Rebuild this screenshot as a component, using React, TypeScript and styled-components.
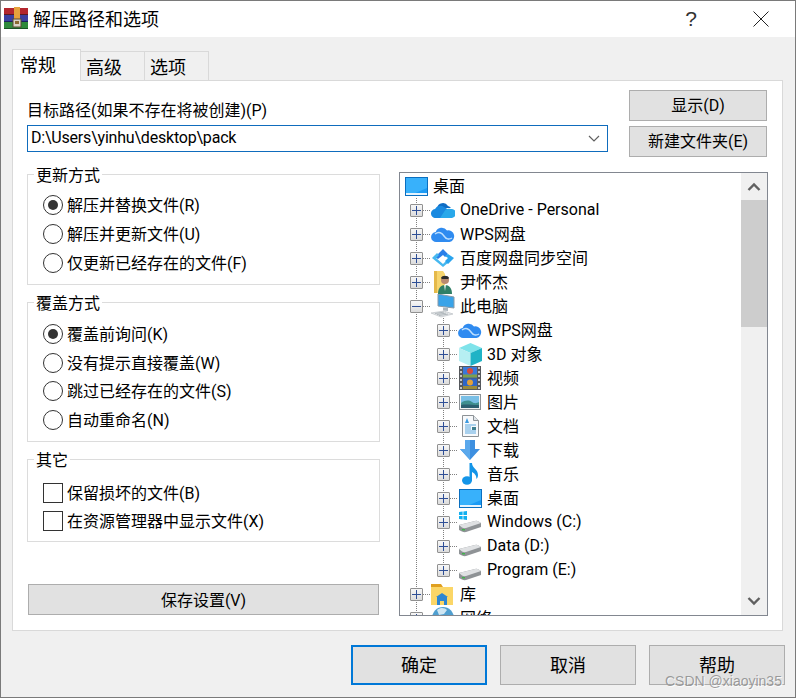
import { ReactNode } from "react";
import styled, { createGlobalStyle } from "styled-components";

const FONT = `Roboto, "Noto Sans CJK SC", sans-serif`;

const GlobalStyle = createGlobalStyle`
  html, body {
    margin: 0;
    padding: 0;
    background: #ffffff;
    overflow: hidden;
  }
  * {
    box-sizing: border-box;
  }
`;

const WinRarIcon = () => (
  <svg width="24" height="24" viewBox="0 0 24 24">
    <rect x="0" y="1" width="24" height="7" fill="#b3262e" />
    <rect x="0" y="8" width="24" height="7" fill="#3b3fa0" />
    <rect x="0" y="15" width="24" height="7" fill="#2f8a3c" />
    <rect x="0" y="7" width="24" height="1" fill="#5c1820" />
    <rect x="0" y="14" width="24" height="1" fill="#1c1f5e" />
    <rect x="0" y="21" width="24" height="1" fill="#1a5223" />
    <rect x="10" y="0" width="6" height="12" fill="#e6a23c" />
    <rect x="9" y="12" width="8" height="8" fill="#d9d4c7" stroke="#5a4a30" />
    <rect x="11" y="14" width="4" height="3" fill="#8a6a30" />
  </svg>
);

const DesktopIcon = () => (
  <svg width="23" height="19" viewBox="0 0 23 19">
    <rect x="0.5" y="0.5" width="22" height="18" fill="#1b9bf5" stroke="#0a6fc0" />
    <path d="M1 1h21v10L8 17H1z" fill="#38b1fb" />
    <rect x="1" y="16" width="21" height="2" fill="#e6f4fe" />
  </svg>
);

const OneDriveIcon = () => (
  <svg width="24" height="16" viewBox="0 0 24 16">
    <path d="M6 6a6 6 0 0 1 11-2 5 5 0 0 1 3 2z" fill="#0f6cc4" />
    <path d="M5 16a4.5 4.5 0 0 1-1-9 6 6 0 0 1 9-2l5 3-7 8z" fill="#1a8ae0" />
    <path d="M9 16l4-6a6 6 0 0 1 7-3 4.5 4.5 0 0 1 1 9z" fill="#29a8ea" />
  </svg>
);

const WpsCloudIcon = () => (
  <svg width="24" height="17" viewBox="0 0 24 17">
    <path
      d="M5.5 16a5 5 0 0 1-.8-10A6.5 6.5 0 0 1 16 4.4 5.8 5.8 0 0 1 18.5 16z"
      fill="#2f8bf0"
    />
    <path d="M4 8c4-3 7-1 9 2s5 4 8 2" fill="none" stroke="#bfe0ff" strokeWidth="1.4" />
  </svg>
);

const BaiduIcon = () => (
  <svg width="24" height="20" viewBox="0 0 24 20">
    <path d="M12 1l5 5-3 3-2-2-5 4-3-2z" fill="#2a7fe8" />
    <path d="M1 10l5-5 2 2-3 3 7 6 4-4 2 2-6 5z" fill="#46b8f0" />
    <path d="M17 6l6 4-6 6-3-3 3-3-3-2z" fill="#2aa4ee" />
  </svg>
);

const UserFolderIcon = () => (
  <svg width="22" height="23" viewBox="0 0 22 23">
    <path d="M2 0h9l2 3v19H2z" fill="#f6d56f" />
    <path d="M2 0h3v22H2z" fill="#e5b94a" />
    <circle cx="13" cy="9" r="4" fill="#b98a70" />
    <path d="M9 7c1-3 7-3 8 0l-1 1H10z" fill="#2b2b2b" />
    <path d="M6 23c0-6 3-9 7-9s7 3 7 9z" fill="#2f7f66" />
    <path d="M12 14h2l-1 6z" fill="#e8f0ec" />
  </svg>
);

const ComputerIcon = () => (
  <svg width="24" height="24" viewBox="0 0 24 24">
    <path d="M7 0l16 3v11L7 12z" fill="#3aa3e8" stroke="#8a9aa8" />
    <path d="M12 13.5l5 .6v3l-5-.6z" fill="#aab4bc" />
    <path d="M0 19l13-2 9 3-12 3z" fill="#e4e7e9" stroke="#b3b9be" strokeWidth="0.6" />
    <path d="M4 19.5l9-1.4M6 20.5l9-1.4M8 21.5l9-1.4" stroke="#9aa2a8" strokeWidth="0.7" />
  </svg>
);

const CubeIcon = () => (
  <svg width="23" height="23" viewBox="0 0 23 23">
    <path d="M11.5 0L23 5 11.5 10 0 5z" fill="#7fe3ea" />
    <path d="M0 5l11.5 5v13L0 18z" fill="#b6eff2" />
    <path d="M23 5L11.5 10v13L23 18z" fill="#1fb3c6" />
  </svg>
);

const FilmIcon = () => (
  <svg width="22" height="24" viewBox="0 0 22 24">
    <rect width="22" height="24" fill="#55585c" />
    <rect x="4" y="1" width="14" height="10.5" fill="#3a78d8" />
    <rect x="4" y="12.5" width="14" height="10.5" fill="#2e66c8" />
    <circle cx="11" cy="5" r="3" fill="#d84a3a" />
    <circle cx="11" cy="16.5" r="3" fill="#e2a13a" />
    <rect x="4" y="8.5" width="14" height="3" fill="#7fa04a" />
    <rect x="4" y="20" width="14" height="3" fill="#9a8a3a" />
    <path d="M1 2h2M1 6h2M1 10h2M1 14h2M1 18h2M1 22h2M19 2h2M19 6h2M19 10h2M19 14h2M19 18h2M19 22h2" stroke="#e8e8e8" strokeWidth="1.6" />
  </svg>
);

const PictureIcon = () => (
  <svg width="22" height="16" viewBox="0 0 22 16">
    <rect x="0.5" y="0.5" width="21" height="15" fill="#f2f2f2" stroke="#8d9296" />
    <rect x="2" y="2" width="18" height="12" fill="#79bfe6" />
    <path d="M2 9c4-3 8-3 11-1s5 1 7 0v6H2z" fill="#3f8f8f" />
    <path d="M2 11c5-1 10 0 18 0v3H2z" fill="#2c5f70" />
  </svg>
);

const DocumentIcon = () => (
  <svg width="17" height="22" viewBox="0 0 17 22">
    <path d="M.5.5h11l5 5v16H.5z" fill="#f7f9fb" stroke="#8d9296" />
    <path d="M11.5.5v5h5" fill="#dfe5ea" stroke="#8d9296" />
    <path d="M5 3L3 8h4z" fill="#3d9ae0" />
    <path d="M3 10h11M3 12h6M3 14h6M3 16h11M3 18h11" stroke="#5aa8e0" />
    <rect x="10" y="12" width="4" height="3" fill="#3f7f8f" />
  </svg>
);

const DownArrowIcon = () => (
  <svg width="20" height="20" viewBox="0 0 20 20">
    <path d="M5 0h10v9h5L10 20 0 9h5z" fill="#3d8fe0" />
    <path d="M5 0h5v20L0 9h5z" fill="#5aa8ec" />
  </svg>
);

const MusicIcon = () => (
  <svg width="17" height="22" viewBox="0 0 17 22">
    <ellipse cx="5" cy="17.5" rx="5" ry="4.2" fill="#1495e8" />
    <path d="M7.5 0H10c0 5 6 6 6 12 0 2-.6 3-1.6 4 .2-4-2.4-6-4.4-7v9H7.5z" fill="#1495e8" />
  </svg>
);

const DriveIcon = ({ windows }: { windows?: boolean }) => (
  <svg width="24" height="22" viewBox="0 0 24 22">
    {windows && <path d="M1 1l3.6-.5V4H1zM5.4.4L9 0v4H5.4zM1 5h3.6v3.5L1 8zM5.4 5H9v4l-3.6-.5z" fill="#12b0f0" />}
    <path d="M1 14l16-4q2-.5 3.5.5L23 12v4L8 21q-2 .5-4-.5L1 19z" fill="#8f9396" />
    <path d="M1 14l16-4q2-.5 3.5.5L23 12 8 17q-2 .5-4-.5z" fill="#dfe1e3" />
    <rect x="4" y="18" width="3" height="1.4" fill="#3fb54a" />
  </svg>
);

const LibraryIcon = () => (
  <svg width="24" height="21" viewBox="0 0 24 21">
    <path d="M0 0h10l2 3H0z" fill="#e0a020" />
    <rect y="3" width="22" height="18" fill="#fbd667" />
    <path d="M6 21v-8H5l6-4 6 4h-1v8h-3v-4H9v4z" fill="#2d86d2" />
  </svg>
);

const GlobeIcon = () => (
  <svg width="24" height="24" viewBox="0 0 24 24">
    <circle cx="12" cy="12" r="11" fill="#4f9fd0" />
    <path d="M6 4c4-3 8-2 10 0l-3 4-5 1z" fill="#cfe6f3" />
  </svg>
);

const Window = styled.div`
  position: relative;
  width: 796px;
  height: 698px;
  display: flex;
  flex-direction: column;
  background: #f0f0f0;
  border: 1px solid #7a7a7a;
  color: #000000;
  font-family: ${FONT};
  font-size: 16px;
`;

const TitleBar = styled.div`
  height: 36px;
  flex: none;
  display: flex;
  align-items: center;
  background: #ffffff;
  padding: 0 26px 0 3px;
`;

const TitleText = styled.span`
  margin-left: 5px;
  padding-bottom: 2px;
  font-size: 18px;
  flex: 1;
`;

const HelpMark = styled.span`
  font-family: "Liberation Sans", sans-serif;
  font-size: 21px;
  color: #333333;
  margin-right: 56px;
`;

const Content = styled.div`
  flex: 1;
  display: flex;
  flex-direction: column;
  padding: 12px 12px 0 11px;
`;

const TabRow = styled.div`
  display: flex;
  align-items: flex-end;
  height: 32px;
  margin-bottom: -1px;
  position: relative;
  z-index: 1;
`;

const Tab = styled.div<{ $active?: boolean }>`
  height: ${({ $active }) => ($active ? 32 : 30)}px;
  width: ${({ $active }) => ($active ? 69 : 64)}px;
  display: flex;
  align-items: center;
  padding-left: ${({ $active }) => ($active ? 7 : 5)}px;
  padding-bottom: ${({ $active }) => ($active ? 3 : 1)}px;
  font-size: 18px;
  background: ${({ $active }) => ($active ? "#ffffff" : "#f0f0f0")};
  border: 1px solid #d9d9d9;
  border-left-width: ${({ $active }) => ($active ? 1 : 0)}px;
  border-bottom: ${({ $active }) => ($active ? "none" : "1px solid #d9d9d9")};
`;

const Panel = styled.div`
  height: 551px;
  background: #ffffff;
  border: 1px solid #d9d9d9;
  padding: 9px 14px 0 14px;
`;

const TopRow = styled.div`
  display: flex;
  justify-content: space-between;
  height: 67px;
  margin-bottom: 15px;
`;

const PathBlock = styled.div`
  width: 581px;
  display: flex;
  flex-direction: column;
  justify-content: flex-end;
  padding-bottom: 5px;
`;

const PathLabel = styled.label`
  line-height: 22px;
  margin-bottom: 3px;
`;

const Combo = styled.div`
  height: 27px;
  display: flex;
  align-items: center;
  justify-content: space-between;
  border: 1px solid #0f6cbd;
  padding: 0 7px 0 3px;
`;

const ComboValue = styled.span`
  padding-bottom: 2px;
  letter-spacing: -0.2px;
`;

const TopButtons = styled.div`
  width: 138px;
  margin-right: 1px;
  display: flex;
  flex-direction: column;
  gap: 5px;
`;

const Button = styled.button`
  height: 31px;
  width: 100%;
  background: #e1e1e1;
  border: 1px solid #adadad;
  border-radius: 0;
  padding: 0 0 3px;
  font-family: inherit;
  font-size: 16px;
  color: #000000;
`;

const Columns = styled.div`
  display: flex;
  justify-content: space-between;
`;

const LeftColumn = styled.div`
  width: 353px;
  padding-top: 2px;
  display: flex;
  flex-direction: column;
  gap: 17px;
`;

const Group = styled.div<{ $height: number; $top: number }>`
  position: relative;
  height: ${({ $height }) => $height}px;
  padding: ${({ $top }) => $top}px 0 0 15px;
  border: 1px solid #dcdcdc;
`;

const GroupTitle = styled.span`
  position: absolute;
  top: -10px;
  left: 6px;
  padding: 0 2px;
  background: #ffffff;
  line-height: 22px;
`;

const OptionRow = styled.div<{ $height: number }>`
  height: ${({ $height }) => $height}px;
  display: flex;
  align-items: center;
  gap: 4px;
`;

const OptionText = styled.span`
  padding-bottom: 2px;
`;

const Radio = styled.span<{ $checked?: boolean }>`
  width: 20px;
  height: 20px;
  flex: none;
  display: flex;
  align-items: center;
  justify-content: center;
  border-radius: 50%;
  border: 1.5px solid #333333;
  &::after {
    content: "";
    width: 10px;
    height: 10px;
    border-radius: 50%;
    background: ${({ $checked }) => ($checked ? "#333333" : "transparent")};
  }
`;

const Checkbox = styled.span`
  width: 20px;
  height: 20px;
  flex: none;
  border: 1.5px solid #333333;
`;

const SaveButton = styled(Button)`
  width: 351px;
  margin: 25px 0 0 1px;
  padding-bottom: 2px;
`;

const Tree = styled.div`
  width: 369px;
  height: 444px;
  display: flex;
  border: 1px solid #828790;
`;

const TreeList = styled.div`
  flex: 1;
  min-width: 0;
  overflow: hidden;
  padding: 1px 0 0 4px;
`;

const TreeRow = styled.div`
  height: 24px;
  display: flex;
  align-items: center;
  white-space: nowrap;
`;

const TreeLabel = styled.span`
  padding-bottom: 2px;
`;

const GUIDE = "repeating-linear-gradient(to bottom, #808080 0 1px, transparent 1px 2px)";
const BRANCH = "repeating-linear-gradient(to right, #808080 0 1px, transparent 1px 2px)";

const Guide = styled.span`
  width: 27px;
  height: 24px;
  flex: none;
  background: ${GUIDE} 12px 0 / 1px 100% no-repeat;
`;

const ExpanderCell = styled.span<{ $last?: boolean }>`
  width: 27px;
  height: 24px;
  flex: none;
  display: flex;
  align-items: center;
  padding: 1px 0 0 6px;
  background:
    ${GUIDE} 12px 0 / 1px ${({ $last }) => ($last ? "50%" : "100%")} no-repeat,
    ${BRANCH} 13px 50% / 14px 1px no-repeat;
`;

const ExpanderBox = styled.span`
  width: 13px;
  height: 13px;
  display: flex;
  background: linear-gradient(#f7f7f7, #dcdcdc);
  border: 1px solid #919191;
  border-radius: 1px;
`;

const IconSlot = styled.span`
  width: 24px;
  height: 24px;
  flex: none;
  margin-right: 5px;
  display: flex;
  align-items: center;
  justify-content: center;
`;

const ScrollTrack = styled.div`
  width: 26px;
  flex: none;
  display: flex;
  flex-direction: column;
  background: #f0f0f0;
`;

const ScrollArrow = styled.div`
  height: 27px;
  flex: none;
  display: flex;
  align-items: center;
  justify-content: center;
`;

const ScrollThumb = styled.div`
  height: 127px;
  flex: none;
  background: #cdcdcd;
`;

const ScrollGap = styled.div`
  flex: 1;
`;

const Footer = styled.div`
  display: flex;
  justify-content: flex-end;
  gap: 13px;
  margin-top: 14px;
  margin-right: -2px;
`;

const DialogButton = styled.button<{ $primary?: boolean }>`
  width: 136px;
  height: 40px;
  padding: 0 0 2px;
  background: #e1e1e1;
  border: ${({ $primary }) => ($primary ? "2px solid #0078d7" : "1px solid #adadad")};
  border-radius: 0;
  font-family: inherit;
  font-size: 18px;
  color: #000000;
`;

const Watermark = styled.span`
  position: absolute;
  left: 664px;
  top: 672px;
  font-family: "Liberation Sans", sans-serif;
  font-size: 14px;
  color: rgba(140, 140, 140, 0.85);
  text-shadow: 1px 1px 0 rgba(255, 255, 255, 0.8);
`;

const Expander = ({ open, last }: { open?: boolean; last?: boolean }) => (
  <ExpanderCell $last={last}>
    <ExpanderBox>
      <svg width="11" height="11" viewBox="0 0 11 11">
        <path d={open ? "M1 5.5h9" : "M1 5.5h9M5.5 1v9"} stroke="#2f4f96" strokeWidth="1" />
      </svg>
    </ExpanderBox>
  </ExpanderCell>
);

interface NodeProps {
  icon: ReactNode;
  label: string;
  level?: 0 | 1 | 2;
  open?: boolean;
  last?: boolean;
}

const TreeNode = ({ icon, label, level = 1, open, last }: NodeProps) => (
  <TreeRow>
    {level === 2 && <Guide />}
    {level > 0 && <Expander open={open} last={last} />}
    <IconSlot>{icon}</IconSlot>
    <TreeLabel>{label}</TreeLabel>
  </TreeRow>
);

const Chevron = ({ up }: { up?: boolean }) => (
  <svg width="14" height="9" viewBox="0 0 14 9">
    <path d={up ? "M1.5 8L7 2.5 12.5 8" : "M1.5 1L7 6.5 12.5 1"} fill="none" stroke="#606060" strokeWidth="2.4" />
  </svg>
);

const App = () => (
  <>
    <GlobalStyle />
    <Window>
      <TitleBar>
        <WinRarIcon />
        <TitleText>解压路径和选项</TitleText>
        <HelpMark>?</HelpMark>
        <svg width="16" height="16" viewBox="0 0 16 16">
          <path d="M.5.5l15 15M15.5.5l-15 15" stroke="#222222" strokeWidth="1" />
        </svg>
      </TitleBar>
      <Content>
        <TabRow>
          <Tab $active>常规</Tab>
          <Tab>高级</Tab>
          <Tab>选项</Tab>
        </TabRow>
        <Panel>
          <TopRow>
            <PathBlock>
              <PathLabel>目标路径(如果不存在将被创建)(P)</PathLabel>
              <Combo>
                <ComboValue>D:\Users\yinhu\desktop\pack</ComboValue>
                <svg width="12" height="7" viewBox="0 0 12 7">
                  <path d="M1 1l5 5 5-5" fill="none" stroke="#606060" strokeWidth="1.2" />
                </svg>
              </Combo>
            </PathBlock>
            <TopButtons>
              <Button>显示(D)</Button>
              <Button>新建文件夹(E)</Button>
            </TopButtons>
          </TopRow>
          <Columns>
            <LeftColumn>
              <Group $height={111} $top={15}>
                <GroupTitle>更新方式</GroupTitle>
                <OptionRow $height={29}><Radio $checked /><OptionText>解压并替换文件(R)</OptionText></OptionRow>
                <OptionRow $height={29}><Radio /><OptionText>解压并更新文件(U)</OptionText></OptionRow>
                <OptionRow $height={29}><Radio /><OptionText>仅更新已经存在的文件(F)</OptionText></OptionRow>
              </Group>
              <Group $height={140} $top={17}>
                <GroupTitle>覆盖方式</GroupTitle>
                <OptionRow $height={28.5}><Radio $checked /><OptionText>覆盖前询问(K)</OptionText></OptionRow>
                <OptionRow $height={28.5}><Radio /><OptionText>没有提示直接覆盖(W)</OptionText></OptionRow>
                <OptionRow $height={28.5}><Radio /><OptionText>跳过已经存在的文件(S)</OptionText></OptionRow>
                <OptionRow $height={28.5}><Radio /><OptionText>自动重命名(N)</OptionText></OptionRow>
              </Group>
              <Group $height={83} $top={19}>
                <GroupTitle>其它</GroupTitle>
                <OptionRow $height={28}><Checkbox /><OptionText>保留损坏的文件(B)</OptionText></OptionRow>
                <OptionRow $height={28}><Checkbox /><OptionText>在资源管理器中显示文件(X)</OptionText></OptionRow>
              </Group>
              <SaveButton>保存设置(V)</SaveButton>
            </LeftColumn>
            <Tree>
              <TreeList>
                <TreeNode level={0} icon={<DesktopIcon />} label="桌面" />
                <TreeNode icon={<OneDriveIcon />} label="OneDrive - Personal" />
                <TreeNode icon={<WpsCloudIcon />} label="WPS网盘" />
                <TreeNode icon={<BaiduIcon />} label="百度网盘同步空间" />
                <TreeNode icon={<UserFolderIcon />} label="尹怀杰" />
                <TreeNode open icon={<ComputerIcon />} label="此电脑" />
                <TreeNode level={2} icon={<WpsCloudIcon />} label="WPS网盘" />
                <TreeNode level={2} icon={<CubeIcon />} label="3D 对象" />
                <TreeNode level={2} icon={<FilmIcon />} label="视频" />
                <TreeNode level={2} icon={<PictureIcon />} label="图片" />
                <TreeNode level={2} icon={<DocumentIcon />} label="文档" />
                <TreeNode level={2} icon={<DownArrowIcon />} label="下载" />
                <TreeNode level={2} icon={<MusicIcon />} label="音乐" />
                <TreeNode level={2} icon={<DesktopIcon />} label="桌面" />
                <TreeNode level={2} icon={<DriveIcon windows />} label="Windows (C:)" />
                <TreeNode level={2} icon={<DriveIcon />} label="Data (D:)" />
                <TreeNode level={2} last icon={<DriveIcon />} label="Program (E:)" />
                <TreeNode icon={<LibraryIcon />} label="库" />
                <TreeNode icon={<GlobeIcon />} label="网络" />
              </TreeList>
              <ScrollTrack>
                <ScrollArrow><Chevron up /></ScrollArrow>
                <ScrollThumb />
                <ScrollGap />
                <ScrollArrow><Chevron /></ScrollArrow>
              </ScrollTrack>
            </Tree>
          </Columns>
        </Panel>
        <Footer>
          <DialogButton $primary>确定</DialogButton>
          <DialogButton>取消</DialogButton>
          <DialogButton>帮助</DialogButton>
        </Footer>
      </Content>
      <Watermark>CSDN @xiaoyin35</Watermark>
    </Window>
  </>
);

export default App;
